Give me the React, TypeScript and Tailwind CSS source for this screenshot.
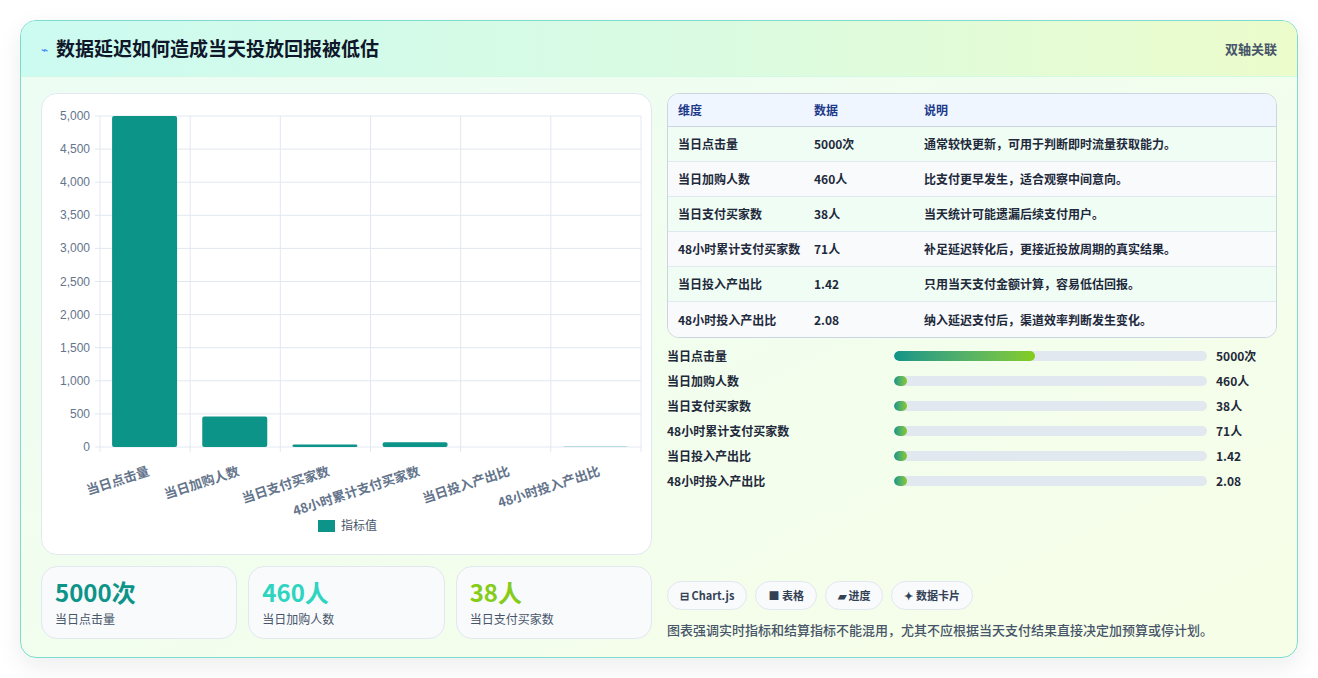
import React from 'react';

const rows = [
  { name: '当日点击量', value: '5000次', num: 5000, note: '通常较快更新，可用于判断即时流量获取能力。' },
  { name: '当日加购人数', value: '460人', num: 460, note: '比支付更早发生，适合观察中间意向。' },
  { name: '当日支付买家数', value: '38人', num: 38, note: '当天统计可能遗漏后续支付用户。' },
  { name: '48小时累计支付买家数', value: '71人', num: 71, note: '补足延迟转化后，更接近投放周期的真实结果。' },
  { name: '当日投入产出比', value: '1.42', num: 1.42, note: '只用当天支付金额计算，容易低估回报。' },
  { name: '48小时投入产出比', value: '2.08', num: 2.08, note: '纳入延迟支付后，渠道效率判断发生变化。' },
];

const progress = [45, 4, 4, 4, 4, 4];

function BarChart() {
  const x0 = 58, x1 = 599, yTop = 22, yBot = 353;
  const colW = (x1 - x0) / 6;
  const ticks = [0, 500, 1000, 1500, 2000, 2500, 3000, 3500, 4000, 4500, 5000];
  const y = (v: number) => yBot - (v / 5000) * (yBot - yTop);
  return (
    <svg width="611" height="461" className="block">
      {ticks.map((t) => (
        <g key={t}>
          <line x1={x0 - 5} x2={x1} y1={y(t)} y2={y(t)} stroke="#e2e8f0" />
          <text x={x0 - 10} y={y(t) + 4} textAnchor="end" fontSize="12" fill="#64748b" fontFamily="Liberation Sans, sans-serif">
            {t.toLocaleString('en-US')}
          </text>
        </g>
      ))}
      {Array.from({ length: 7 }).map((_, i) => (
        <line key={i} x1={x0 + i * colW} x2={x0 + i * colW} y1={yTop} y2={yBot + 5} stroke="#e2e8f0" />
      ))}
      {rows.map((r, i) => {
        const cx = x0 + colW * (i + 0.5);
        const h = yBot - y(r.num);
        return (
          <g key={r.name}>
            <rect x={cx - 33} y={yBot - h} width={65} height={h} rx={2} fill="#0d9488" />
            <text
              transform={`translate(${cx + 5},${yBot + 28}) rotate(-18)`}
              textAnchor="end"
              fontSize="13"
              fontWeight="600"
              fill="#64748b"
              fontFamily="'Noto Sans CJK SC', sans-serif"
            >
              {r.name}
            </text>
          </g>
        );
      })}
      <rect x="276" y="426" width="17" height="12" fill="#0d9488" />
      <text x="299" y="436" fontSize="12" fill="#475569" fontFamily="'Noto Sans CJK SC', sans-serif">指标值</text>
    </svg>
  );
}

export default function App() {
  return (
    <div className="w-[1318px] h-[678px] bg-white p-5 pb-5" style={{ fontFamily: "'Noto Sans CJK SC', sans-serif" }}>
      <div className="h-[638px] rounded-2xl border border-[#7ddbd0] bg-gradient-to-br from-[#ecfdf5] to-[#f7fee7] shadow-[0_8px_24px_rgba(15,23,42,0.08)] overflow-hidden flex flex-col">
        <div className="h-[56px] flex items-center justify-between px-5 bg-gradient-to-r from-[#ccfbf1] via-[#d9fbe3] to-[#ecfccb] border-b border-[#d1fae5]">
          <div className="flex items-center gap-2">
            <span className="text-[#3b82f6] text-xs">⌁</span>
            <h1 className="text-[19px] font-bold text-[#0f172a]">数据延迟如何造成当天投放回报被低估</h1>
          </div>
          <span className="text-[13px] font-semibold text-[#475569]">双轴关联</span>
        </div>
        <div className="flex gap-[15px] px-5 pt-4">
          <div className="w-[611px] flex flex-col gap-[11px]">
            <div className="h-[462px] rounded-2xl bg-white border border-[#e2e8f0]">
              <BarChart />
            </div>
            <div className="grid grid-cols-3 gap-[11px]">
              {[
                { v: '5000次', c: 'text-[#0d9488]', l: '当日点击量' },
                { v: '460人', c: 'text-[#2dd4bf]', l: '当日加购人数' },
                { v: '38人', c: 'text-[#84cc16]', l: '当日支付买家数' },
              ].map((k) => (
                <div key={k.l} className="h-[73px] rounded-2xl bg-[#f8fafc] border border-[#e2e8f0] px-[13px] pt-[9px]">
                  <div className={`text-[24px] font-bold leading-8 ${k.c}`}>{k.v}</div>
                  <div className="text-[12px] text-[#475569] mt-0.5">{k.l}</div>
                </div>
              ))}
            </div>
          </div>
          <div className="w-[612px] flex flex-col">
            <div className="rounded-xl border border-[#cbd5e1] overflow-hidden text-[12px] font-semibold text-[#1e293b]">
              <div className="h-[33px] flex items-center bg-[#eff6ff] text-[#1e3a8a] border-b border-[#cbd5e1]">
                <div className="w-[146px] pl-[10px]">维度</div>
                <div className="w-[110px]">数据</div>
                <div>说明</div>
              </div>
              {rows.map((r, i) => (
                <div key={r.name} className={`h-[35px] flex items-center ${i % 2 ? 'bg-[#f8fafc]' : 'bg-[#f0fdf4]'} ${i < 5 ? 'border-b border-[#e2e8f0]' : ''}`}>
                  <div className="w-[146px] pl-[10px]">{r.name}</div>
                  <div className="w-[110px]">{r.value}</div>
                  <div>{r.note}</div>
                </div>
              ))}
            </div>
            <div className="mt-[10px] flex flex-col gap-[9px] text-[12px] font-semibold text-[#1e293b]">
              {rows.map((r, i) => (
                <div key={r.name} className="h-4 flex items-center">
                  <div className="w-[227px]">{r.name}</div>
                  <div className="w-[313px] h-[10px] rounded-full bg-[#e2e8f0] overflow-hidden">
                    <div className="h-full rounded-full bg-gradient-to-r from-[#0d9488] to-[#84cc16]" style={{ width: `${progress[i]}%` }} />
                  </div>
                  <div className="ml-[9px]">{r.value}</div>
                </div>
              ))}
            </div>
            <div className="mt-auto flex gap-2 text-[11px] font-semibold text-[#334155]">
              {['⊟ Chart.js', '■ 表格', '▰ 进度', '✦ 数据卡片'].map((p) => (
                <span key={p} className="h-[29px] px-3 flex items-center rounded-full bg-[#f8fafc] border border-[#e2e8f0]">{p}</span>
              ))}
            </div>
            <p className="mt-[10px] text-[13px] text-[#475569] font-medium">图表强调实时指标和结算指标不能混用，尤其不应根据当天支付结果直接决定加预算或停计划。</p>
          </div>
        </div>
      </div>
    </div>
  );
}
